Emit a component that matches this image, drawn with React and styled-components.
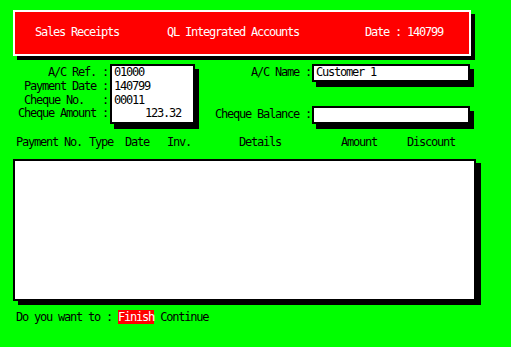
import React from "react";
import styled, { createGlobalStyle } from "styled-components";

const GlobalStyle = createGlobalStyle`
  body {
    margin: 0;
    background: #00ff00;
    font-family: "DejaVu Sans Mono", "Liberation Mono", monospace;
    font-size: 12px;
    line-height: 13.8px;
    letter-spacing: -1.22px;
    color: #000;
  }
`;

const Screen = styled.div`
  width: 511px;
  height: 347px;
  box-sizing: border-box;
  padding: 10px 0 0 13px;
  background: #00ff00;
  overflow: hidden;
`;

const Header = styled.header`
  width: 458px;
  height: 46px;
  box-sizing: border-box;
  border: 2px solid #fff;
  background: #ff0000;
  color: #fff;
  box-shadow: 4px 4px 0 #000;
  display: grid;
  grid-template-columns: 132px 198px auto;
  align-items: center;
  padding-left: 20px;
  white-space: pre;
`;

const Form = styled.section`
  display: flex;
  align-items: stretch;
  margin-top: 8px;
`;

const Labels = styled.div`
  width: 95px;
  padding: 2px 2px 0 0;
  text-align: right;
  white-space: pre;
`;

const Field = styled.div`
  width: ${({ $width }) => $width}px;
  height: ${({ $height }) => ($height ? `${$height}px` : "auto")};
  box-sizing: border-box;
  border: 2px solid #000;
  background: #fff;
  box-shadow: 4px 5px 0 #000;
  padding: 0 0 1px 2px;
  white-space: pre;
`;

const Amount = styled.div`
  text-align: right;
  padding-right: 12px;
`;

const RightGroup = styled.div`
  display: flex;
  flex-direction: column;
  justify-content: space-between;
`;

const Row = styled.div`
  display: flex;
  align-items: center;
`;

const RowLabel = styled.div`
  width: 117px;
  text-align: right;
  white-space: pre;
  padding-right: 1px;
  box-sizing: border-box;
`;

const ColumnHeads = styled.div`
  display: flex;
  margin-top: 12px;
  padding-left: 3px;
  white-space: pre;
`;

const Col = styled.span`
  width: ${({ $w }) => $w}px;
  flex: none;
`;

const ListBox = styled.div`
  width: 463px;
  height: 142px;
  box-sizing: border-box;
  margin-top: 9px;
  border: 2px solid #000;
  background: #fff;
  box-shadow: 5px 4px 0 #000;
`;

const Prompt = styled.div`
  margin-top: 10px;
  padding-left: 3px;
  white-space: pre;
`;

const Option = styled.span`
  background: ${({ $active }) => ($active ? "#ff0000" : "transparent")};
  color: ${({ $active }) => ($active ? "#fff" : "#000")};
`;

const columns = [
  ["Payment No.", 73],
  ["Type", 36],
  ["Date", 42],
  ["Inv.", 72],
  ["Details", 102],
  ["Amount", 66],
  ["Discount", 60],
];

export default function App() {
  return (
    <Screen>
      <GlobalStyle />
      <Header>
        <span>Sales Receipts</span>
        <span>QL Integrated Accounts</span>
        <span>Date : 140799</span>
      </Header>

      <Form>
        <Labels>
          <div>A/C Ref. :</div>
          <div>Payment Date :</div>
          <div>Cheque No.   :</div>
          <div>Cheque Amount :</div>
        </Labels>
        <Field $width={85}>
          <div>01000</div>
          <div>140799</div>
          <div>00011</div>
          <Amount>123.32</Amount>
        </Field>
        <RightGroup>
          <Row>
            <RowLabel>A/C Name :</RowLabel>
            <Field $width={158} $height={18}>Customer 1</Field>
          </Row>
          <Row>
            <RowLabel>Cheque Balance :</RowLabel>
            <Field $width={158} $height={18}></Field>
          </Row>
        </RightGroup>
      </Form>

      <ColumnHeads>
        {columns.map(([title, w]) => (
          <Col key={title} $w={w}>
            {title}
          </Col>
        ))}
      </ColumnHeads>

      <ListBox />

      <Prompt>
        Do you want to : <Option $active>Finish</Option> <Option>Continue</Option>
      </Prompt>
    </Screen>
  );
}
